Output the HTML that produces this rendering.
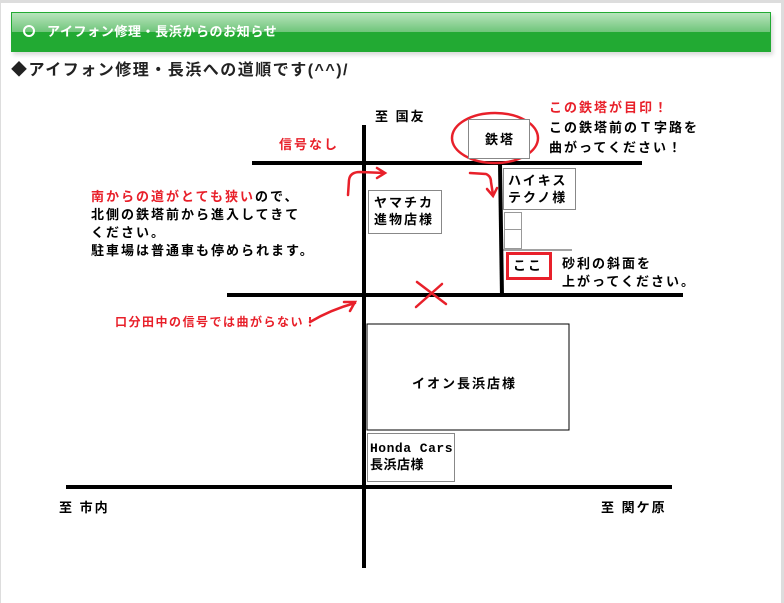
<!DOCTYPE html>
<html><head><meta charset="utf-8"><style>
body{margin:0;width:784px;height:600px;overflow:hidden;background:#ddd;font-family:"Liberation Sans","Noto Sans CJK JP",sans-serif}
#pg{position:absolute;left:1px;top:3px;width:780px;height:600px;background:#fff}
.bar{position:absolute;left:11px;top:12px;border:1px solid #22aa33;background:linear-gradient(#b8e4bc,#6fc57a 50%,#22aa33 50%,#22aa33);box-shadow:2px 3px 4px rgba(0,0,0,.15);color:#fff;font-weight:bold;font-size:13px;line-height:38px;box-sizing:border-box;width:760px;height:40px;letter-spacing:0.6px}
.bar span{display:inline-block;width:8px;height:8px;border:2px solid #fff;border-radius:50%;margin:0 12px 0 11px;vertical-align:-1px}
.h2{position:absolute;left:11px;top:56px;font-size:16px;font-weight:bold;color:#222;letter-spacing:1.5px}
.t{position:absolute;font-size:13px;font-weight:bold;color:#000;line-height:17px;white-space:nowrap;letter-spacing:2px}
.r{color:#e8202a}
.b{position:absolute;box-sizing:border-box;border:1px solid #888;background:#fff}
</style></head><body>
<div id="pg"></div>
<div class="bar"><span></span>アイフォン修理・長浜からのお知らせ</div>
<div class="h2">◆アイフォン修理・長浜への道順です(^^)/</div>
<svg width="784" height="600" style="position:absolute;left:0;top:0">
<g stroke="#000" stroke-width="4" fill="none">
<line x1="364" y1="125" x2="364" y2="568"/>
<line x1="252" y1="163" x2="642" y2="163"/>
<line x1="500" y1="163" x2="502" y2="297"/>
<line x1="227" y1="295" x2="683" y2="295"/>
<line x1="66" y1="487" x2="672" y2="487"/>
</g>
<line x1="503" y1="250" x2="572" y2="250" stroke="#444" stroke-width="1"/>
<rect x="367" y="324" width="202" height="106" fill="none" stroke="#000" stroke-width="1"/>
<ellipse cx="495" cy="138" rx="43" ry="25" fill="none" stroke="#e8202a" stroke-width="2.5"/>
<g stroke="#e8202a" stroke-width="2.5" fill="none" stroke-linecap="round">
<path d="M348 195 L349 180 Q350 172 360 172 L385 173 M377 168 L385 173 L377 178"/>
<path d="M470 173 L486 174 Q491 176 491 182 L493 195 M487 189 L493 196 L497 188"/>
<path d="M417 282 L446 304 M416 307 L442 284"/>
<path d="M310 322 Q330 310 355 303 M344 302 L355 302 L350 311"/>
</g>
</svg>
<div class="b" style="left:468px;top:119px;width:62px;height:40px;"></div>
<div class="t" style="left:485px;top:131px">鉄塔</div>
<div class="b" style="left:368px;top:190px;width:74px;height:44px;"></div>
<div class="t" style="left:374px;top:194px">ヤマチカ<br>進物店様</div>
<div class="b" style="left:503px;top:168px;width:73px;height:42px;"></div>
<div class="t" style="left:508px;top:172px">ハイキス<br>テクノ様</div>
<div class="b" style="left:504px;top:212px;width:18px;height:18px;border-color:#999"></div>
<div class="b" style="left:504px;top:229px;width:18px;height:20px;border-color:#999"></div>
<div class="b" style="left:506px;top:252px;width:46px;height:28px;border:3px solid #e8202a"></div>
<div class="t" style="left:513px;top:257px">ここ</div>
<div class="b" style="left:367px;top:433px;width:88px;height:49px;"></div>
<div class="t" style="left:370px;top:440px;letter-spacing:0.5px;font-family:'Liberation Mono','Noto Sans CJK JP',monospace">Honda Cars<br>長浜店様</div>
<div class="t" style="left:412px;top:375px">イオン長浜店様</div>
<div class="t" style="left:375px;top:108px">至 国友</div>
<div class="t r" style="left:279px;top:136px">信号なし</div>
<div class="t r" style="left:549px;top:99px">この鉄塔が目印！</div>
<div class="t" style="left:549px;top:118px;line-height:20px">この鉄塔前のＴ字路を<br>曲がってください！</div>
<div class="t" style="left:91px;top:188px;line-height:18px"><span class="r">南からの道がとても狭い</span>ので、<br>北側の鉄塔前から進入してきて<br>ください。<br>駐車場は普通車も停められます。</div>
<div class="t r" style="left:115px;top:314px;font-size:12px;letter-spacing:1.5px">口分田中の信号では曲がらない！</div>
<div class="t" style="left:562px;top:255px;line-height:18px">砂利の斜面を<br>上がってください。</div>
<div class="t" style="left:59px;top:499px">至 市内</div>
<div class="t" style="left:601px;top:499px">至 関ケ原</div>
</body></html>
